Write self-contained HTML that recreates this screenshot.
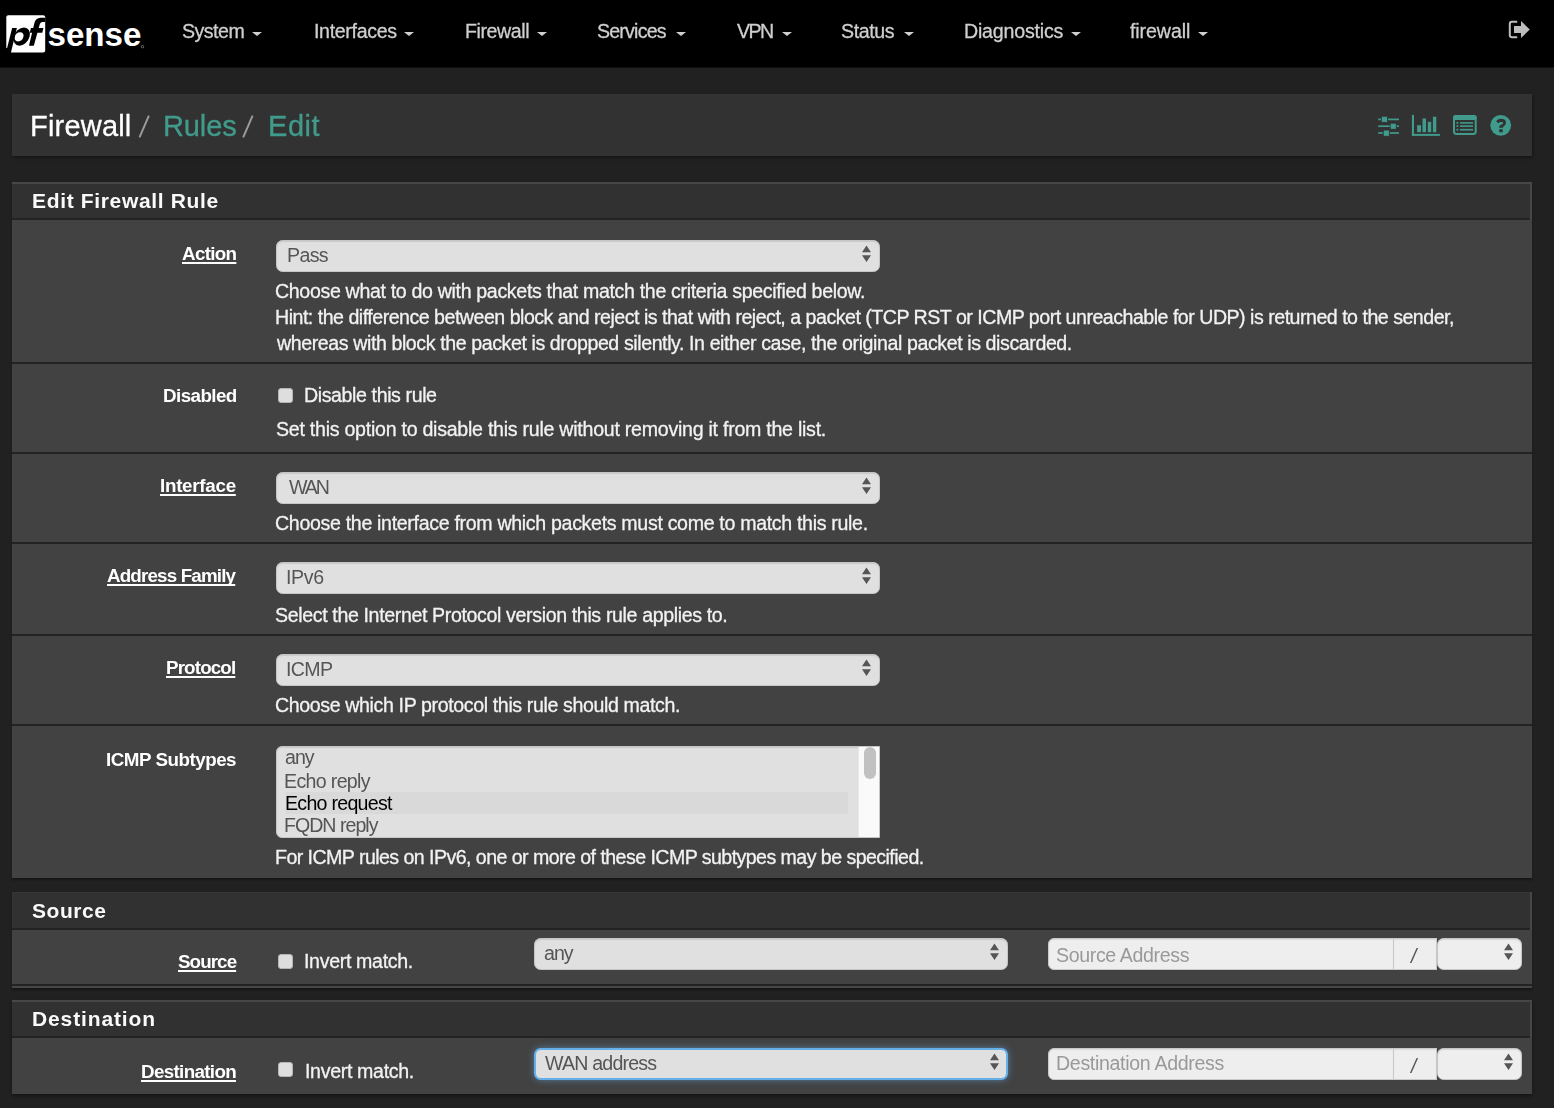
<!DOCTYPE html>
<html><head><meta charset="utf-8">
<style>
*{box-sizing:border-box;margin:0;padding:0}
html,body{width:1554px;height:1108px;overflow:hidden;background:#212121;font-family:"Liberation Sans",sans-serif;color:#f2f2f2}
.a{position:absolute}
.x{position:absolute;white-space:nowrap;line-height:20px;will-change:transform}
.car{position:absolute;width:0;height:0;border-left:5px solid transparent;border-right:5px solid transparent;border-top:4.5px solid #cfcfcf}
.sep{position:absolute;left:12px;width:1520px;height:2px;background:#232323}
.sel{position:absolute;background:#e0e0e0;border:1px solid #c6c6c6;border-radius:6.5px;box-shadow:inset 0 1px 1px rgba(0,0,0,.1)}
.cb{position:absolute;left:278px;width:15px;height:15px;background:#dedede;border:1px solid #b5b5b5;border-radius:3px}
.inp{position:absolute;background:#eeeeee;border:1px solid #c9c9c9;box-shadow:inset 0 1px 1px rgba(0,0,0,.08)}
</style></head><body>

<!-- NAVBAR -->
<div class="a" style="left:0;top:0;width:1554px;height:67px;background:#000"></div>
<div class="a" style="left:0;top:67px;width:1554px;height:1px;background:#101010"></div>
<svg class="a" style="left:5px;top:14px" width="142" height="42" viewBox="0 0 142 42">
  <path d="M1.3 3.3 Q1.3 1.3 3.3 1.3 H38.2 Q40.2 1.3 40.2 3.3 V36.5 Q40.2 38.5 38.2 38.5 H5.6 L1.3 33.6 Z" fill="#fff"/>
  <g transform="translate(16.7 22.55) skewX(-14)"><ellipse cx="0" cy="0" rx="7.9" ry="9.15" fill="#000"/></g>
  <g transform="translate(14.05 22.8) skewX(-14)"><ellipse cx="0" cy="0" rx="4.4" ry="4.6" fill="#fff"/></g>
  <path d="M7.1 13.9 L11.9 13.9 L4.6 44 L-0.4 44 Z" fill="#000"/>
  <path d="M24 31.7 L29.4 9 Q30.6 3.9 35.5 3.7 L40.3 3.7 L40.3 8.1 L37.2 8.1 Q35.3 8.3 34.7 10.5 L28.8 31.7 Z" fill="#000"/>
  <path d="M25.9 13.9 L38.4 13.9 L37.3 18.7 L24.8 18.7 Z" fill="#000"/>
  <text x="42.5" y="32.3" font-family="Liberation Sans" font-weight="bold" font-size="34" fill="#fff" textLength="94" lengthAdjust="spacingAndGlyphs">sense</text>
  <circle cx="137.5" cy="32.7" r="1.2" fill="none" stroke="#aaa" stroke-width=".6"/>
</svg>
<div class="car" style="left:252px;top:32px"></div><div class="car" style="left:404px;top:32px"></div><div class="car" style="left:537px;top:32px"></div><div class="car" style="left:676px;top:32px"></div><div class="car" style="left:782px;top:32px"></div><div class="car" style="left:904px;top:32px"></div><div class="car" style="left:1071px;top:32px"></div><div class="car" style="left:1198px;top:32px"></div>
<svg class="a" style="left:1507px;top:19px" width="25" height="21" viewBox="0 0 25 21">
  <path d="M10.2 2.8 H5 Q2.8 2.8 2.8 5 V16 Q2.8 18.2 5 18.2 H10.2" fill="none" stroke="#bdbdbd" stroke-width="2"/>
  <path d="M7 7 H14 V2 L22.8 10.5 L14 19 V14 H7 Z" fill="#bdbdbd"/>
</svg>

<!-- BREADCRUMB -->
<div class="a" style="left:12px;top:94px;width:1520px;height:62px;background:#323232;box-shadow:1px 2px 3px rgba(0,0,0,.35)"></div>
<svg class="a" style="left:1376px;top:112px" width="140" height="28" viewBox="0 0 140 28">
 <g fill="#419b8c">
  <rect x="2.2" y="6.55" width="20.8" height="1.7" />
  <rect x="2.2" y="13.35" width="20.8" height="1.7" />
  <rect x="2.2" y="20.15" width="20.8" height="1.7" />
 </g>
 <g fill="#419b8c" stroke="#323232" stroke-width="0.9">
  <rect x="5.35" y="4.25" width="6.2" height="6.2" rx=".8"/>
  <rect x="14.15" y="11.15" width="6.2" height="6.2" rx=".8"/>
  <rect x="7.25" y="18.05" width="6.2" height="6.3" rx=".8"/>
 </g>
 <g fill="#419b8c">
  <rect x="35.9" y="2.9" width="2.1" height="21"/>
  <rect x="35.9" y="21.9" width="28" height="2"/>
  <rect x="41.1" y="13.2" width="3.9" height="7"/>
  <rect x="46.5" y="6.5" width="3.5" height="13.7"/>
  <rect x="51.8" y="9.8" width="3.4" height="10.4"/>
  <rect x="56.9" y="4.7" width="3.4" height="15.5"/>
 </g>
 <rect x="78" y="3.9" width="21.7" height="18.1" rx="2.5" fill="none" stroke="#419b8c" stroke-width="2"/>
 <rect x="77" y="2.9" width="23.7" height="5" rx="2.5" fill="#419b8c"/>
 <g fill="#419b8c">
  <rect x="80.5" y="10" width="1.8" height="1.8"/><rect x="84" y="10.1" width="13" height="1.6"/>
  <rect x="80.5" y="13.2" width="1.8" height="1.8"/><rect x="84" y="13.3" width="13" height="1.6"/>
  <rect x="80.5" y="16.8" width="1.8" height="1.8"/><rect x="84" y="16.9" width="13" height="1.6"/>
 </g>
 <circle cx="124.7" cy="13.35" r="10.4" fill="#419b8c"/>
 <path d="M120.2 9.4 Q121.5 6.7 124.9 6.7 Q130 6.7 130 10.8 Q130 13 127.8 14.2 Q127 14.7 127 15.7 L123 15.7 Q123 13.9 124.5 13 Q127.3 11.8 127.3 11 Q127.3 9.9 125 9.9 Q123.4 9.9 122.6 11.2 Z M123.2 17.3 H126.7 V20.2 H123.2 Z" fill="#323232"/>
</svg>
<svg class="a" style="left:130px;top:110px" width="130" height="32" viewBox="130 110 130 32"><path d="M148.9 115.6 L139.5 137.4 M252.6 115.6 L243.2 137.4" stroke="#9a9a9a" stroke-width="2" stroke-linecap="butt"/></svg>

<!-- PANEL 1 -->
<div class="a" style="left:12px;top:182px;width:1520px;height:696px;background:#474747;box-shadow:0 2px 2px rgba(0,0,0,.35)"></div>
<div class="a" style="left:12px;top:184px;width:1518px;height:34px;background:#313131"></div>
<div class="a" style="left:12px;top:218px;width:1518px;height:2px;background:#232323"></div>
<div class="a" style="left:12px;top:220px;width:1520px;height:658px;background:#424242"></div>
<div class="sep" style="top:362px"></div>
<div class="sep" style="top:452px"></div>
<div class="sep" style="top:542px"></div>
<div class="sep" style="top:634px"></div>
<div class="sep" style="top:724px"></div>

<div class="sel" style="left:276px;top:240px;width:604px;height:32px"></div>
<div class="cb" style="top:388px"></div>
<div class="sel" style="left:276px;top:472px;width:604px;height:32px"></div>
<div class="sel" style="left:276px;top:562px;width:604px;height:32px"></div>
<div class="sel" style="left:276px;top:654px;width:604px;height:32px"></div>
<div class="a" style="left:276px;top:746px;width:604px;height:92px;background:#e0e0e0;border:1px solid #c6c6c6;border-radius:6px 0 0 6px;overflow:hidden;box-shadow:inset 0 1px 1px rgba(0,0,0,.1)">
  <div class="a" style="left:9px;top:45px;width:562px;height:22px;background:#d9d9d9"></div>
  <div class="a" style="left:581px;top:0;width:22px;height:92px;background:#fafafa;border-left:1px solid #e8e8e8"></div>
  <div class="a" style="left:587px;top:0px;width:12px;height:32px;background:#c1c1c1;border-radius:6px"></div>
</div>

<!-- SOURCE PANEL -->
<div class="a" style="left:12px;top:892px;width:1520px;height:96px;background:#424242;box-shadow:0 2px 2px rgba(0,0,0,.35)"></div>
<div class="a" style="left:1530px;top:892px;width:2px;height:38px;background:#474747"></div>
<div class="a" style="left:12px;top:892px;width:1518px;height:36px;background:#313131;border-top:1px solid #353535;border-left:1px solid #353535"></div>
<div class="a" style="left:12px;top:928px;width:1518px;height:2px;background:#232323"></div>
<div class="a" style="left:12px;top:984px;width:1520px;height:2px;background:#232323"></div>
<div class="a" style="left:12px;top:986px;width:1520px;height:2px;background:#474747"></div>
<div class="cb" style="top:954px"></div>
<div class="sel" style="left:534px;top:938px;width:474px;height:32px"></div>
<div class="inp" style="left:1048px;top:938px;width:346px;height:32px;border-radius:6px 0 0 6px"></div>
<div class="inp" style="left:1393px;top:938px;width:44px;height:32px"></div>
<div class="sel" style="left:1437px;top:938px;width:85px;height:32px;background:#eeeeee"></div>

<!-- DEST PANEL -->
<div class="a" style="left:12px;top:1000px;width:1520px;height:94px;background:#424242;box-shadow:0 2px 3px rgba(0,0,0,.4)"></div>
<div class="a" style="left:12px;top:1000px;width:1520px;height:2px;background:#474747"></div>
<div class="a" style="left:1530px;top:1000px;width:2px;height:38px;background:#474747"></div>
<div class="a" style="left:12px;top:1002px;width:1518px;height:34px;background:#313131"></div>
<div class="a" style="left:12px;top:1036px;width:1518px;height:2px;background:#232323"></div>
<div class="cb" style="top:1062px"></div>
<div class="sel" style="left:534px;top:1048px;width:474px;height:32px;border:2px solid #66afe9;box-shadow:0 0 7px rgba(102,175,233,.55)"></div>
<div class="inp" style="left:1048px;top:1048px;width:346px;height:32px;border-radius:6px 0 0 6px"></div>
<div class="inp" style="left:1393px;top:1048px;width:44px;height:32px"></div>
<div class="sel" style="left:1437px;top:1048px;width:85px;height:32px;background:#eeeeee"></div>
<svg class="a" style="left:862.0px;top:245.2px" width="9" height="18" viewBox="0 0 9 18"><path d="M4.5 0.6 L9 7.3 L0 7.3 Z M0 10.3 L9 10.3 L4.5 17 Z" fill="#555"/></svg><svg class="a" style="left:862.0px;top:477.2px" width="9" height="18" viewBox="0 0 9 18"><path d="M4.5 0.6 L9 7.3 L0 7.3 Z M0 10.3 L9 10.3 L4.5 17 Z" fill="#555"/></svg><svg class="a" style="left:862.0px;top:567.2px" width="9" height="18" viewBox="0 0 9 18"><path d="M4.5 0.6 L9 7.3 L0 7.3 Z M0 10.3 L9 10.3 L4.5 17 Z" fill="#555"/></svg><svg class="a" style="left:862.0px;top:659.2px" width="9" height="18" viewBox="0 0 9 18"><path d="M4.5 0.6 L9 7.3 L0 7.3 Z M0 10.3 L9 10.3 L4.5 17 Z" fill="#555"/></svg><svg class="a" style="left:989.9px;top:943.3px" width="9" height="18" viewBox="0 0 9 18"><path d="M4.5 0.6 L9 7.3 L0 7.3 Z M0 10.3 L9 10.3 L4.5 17 Z" fill="#555"/></svg><svg class="a" style="left:1503.9px;top:943.3px" width="9" height="18" viewBox="0 0 9 18"><path d="M4.5 0.6 L9 7.3 L0 7.3 Z M0 10.3 L9 10.3 L4.5 17 Z" fill="#555"/></svg><svg class="a" style="left:989.9px;top:1053.3px" width="9" height="18" viewBox="0 0 9 18"><path d="M4.5 0.6 L9 7.3 L0 7.3 Z M0 10.3 L9 10.3 L4.5 17 Z" fill="#555"/></svg><svg class="a" style="left:1503.9px;top:1053.3px" width="9" height="18" viewBox="0 0 9 18"><path d="M4.5 0.6 L9 7.3 L0 7.3 Z M0 10.3 L9 10.3 L4.5 17 Z" fill="#555"/></svg>

<div class="x" id="n1" style="top:21.0px;font-size:19.6px;font-weight:normal;color:#cfcfcf;letter-spacing:-0.520px;-webkit-text-stroke:0.3px #cfcfcf;left:182.36px">System</div>
<div class="x" id="n2" style="top:21.0px;font-size:19.6px;font-weight:normal;color:#cfcfcf;letter-spacing:-0.333px;-webkit-text-stroke:0.3px #cfcfcf;left:313.62px">Interfaces</div>
<div class="x" id="n3" style="top:21.0px;font-size:19.6px;font-weight:normal;color:#cfcfcf;letter-spacing:-0.429px;-webkit-text-stroke:0.3px #cfcfcf;left:465.22px">Firewall</div>
<div class="x" id="n4" style="top:21.0px;font-size:19.6px;font-weight:normal;color:#cfcfcf;letter-spacing:-0.800px;-webkit-text-stroke:0.3px #cfcfcf;left:597.38px">Services</div>
<div class="x" id="n5" style="top:21.0px;font-size:19.6px;font-weight:normal;color:#cfcfcf;letter-spacing:-1.600px;-webkit-text-stroke:0.3px #cfcfcf;left:737.00px">VPN</div>
<div class="x" id="n6" style="top:21.0px;font-size:19.6px;font-weight:normal;color:#cfcfcf;letter-spacing:-0.400px;-webkit-text-stroke:0.3px #cfcfcf;left:841.36px">Status</div>
<div class="x" id="n7" style="top:21.0px;font-size:19.6px;font-weight:normal;color:#cfcfcf;letter-spacing:-0.200px;-webkit-text-stroke:0.3px #cfcfcf;left:963.50px">Diagnostics</div>
<div class="x" id="n8" style="top:21.0px;font-size:19.6px;font-weight:normal;color:#cfcfcf;letter-spacing:-0.086px;-webkit-text-stroke:0.3px #cfcfcf;left:1130.46px">firewall</div>
<div class="x" id="b1" style="top:116.0px;font-size:29px;font-weight:normal;color:#ffffff;letter-spacing:0.200px;-webkit-text-stroke:0.3px #ffffff;left:30.36px">Firewall</div>
<div class="x" id="b3" style="top:116.0px;font-size:29px;font-weight:normal;color:#419b8c;letter-spacing:-0.100px;-webkit-text-stroke:0.3px #419b8c;left:163.00px">Rules</div>
<div class="x" id="b5" style="top:116.0px;font-size:29px;font-weight:normal;color:#419b8c;letter-spacing:0.533px;-webkit-text-stroke:0.3px #419b8c;left:267.62px">Edit</div>
<div class="x" id="h1" style="top:191.0px;font-size:21px;font-weight:bold;color:#fafafa;letter-spacing:0.659px;left:32.36px">Edit Firewall Rule</div>
<div class="x" id="h2" style="top:901.0px;font-size:21px;font-weight:bold;color:#fafafa;letter-spacing:0.560px;left:31.96px">Source</div>
<div class="x" id="h3" style="top:1009.0px;font-size:21px;font-weight:bold;color:#fafafa;letter-spacing:0.870px;left:31.96px">Destination</div>
<div class="x" id="l1" style="top:244.0px;font-size:18.8px;font-weight:bold;color:#ffffff;letter-spacing:-0.680px;text-decoration:underline;text-decoration-thickness:1.5px;text-underline-offset:2px;text-decoration-skip-ink:none;right:1318.00px">Action</div>
<div class="x" id="l2" style="top:386.0px;font-size:18.8px;font-weight:bold;color:#ffffff;letter-spacing:-0.571px;right:1317.60px">Disabled</div>
<div class="x" id="l3" style="top:476.0px;font-size:18.8px;font-weight:bold;color:#ffffff;letter-spacing:-0.275px;text-decoration:underline;text-decoration-thickness:1.5px;text-underline-offset:2px;text-decoration-skip-ink:none;right:1318.40px">Interface</div>
<div class="x" id="l4" style="top:566.0px;font-size:18.8px;font-weight:bold;color:#ffffff;letter-spacing:-0.831px;text-decoration:underline;text-decoration-thickness:1.5px;text-underline-offset:2px;text-decoration-skip-ink:none;right:1318.60px">Address Family</div>
<div class="x" id="l5" style="top:658.0px;font-size:18.8px;font-weight:bold;color:#ffffff;letter-spacing:-0.857px;text-decoration:underline;text-decoration-thickness:1.5px;text-underline-offset:2px;text-decoration-skip-ink:none;right:1319.00px">Protocol</div>
<div class="x" id="l6" style="top:750.0px;font-size:18.8px;font-weight:bold;color:#ffffff;letter-spacing:-0.483px;right:1317.60px">ICMP Subtypes</div>
<div class="x" id="l7" style="top:952.0px;font-size:18.8px;font-weight:bold;color:#ffffff;letter-spacing:-0.920px;text-decoration:underline;text-decoration-thickness:1.5px;text-underline-offset:2px;text-decoration-skip-ink:none;right:1318.20px">Source</div>
<div class="x" id="l8" style="top:1062.0px;font-size:18.8px;font-weight:bold;color:#ffffff;letter-spacing:-0.660px;text-decoration:underline;text-decoration-thickness:1.5px;text-underline-offset:2px;text-decoration-skip-ink:none;right:1318.00px">Destination</div>
<div class="x" id="t1" style="top:281.0px;font-size:19.6px;font-weight:normal;color:#f2f2f2;letter-spacing:-0.340px;-webkit-text-stroke:0.3px #f2f2f2;left:275.38px">Choose what to do with packets that match the criteria specified below.</div>
<div class="x" id="t2" style="top:307.0px;font-size:19.6px;font-weight:normal;color:#f2f2f2;letter-spacing:-0.497px;-webkit-text-stroke:0.3px #f2f2f2;left:275.38px">Hint: the difference between block and reject is that with reject, a packet (TCP RST or ICMP port unreachable for UDP) is returned to the sender,</div>
<div class="x" id="t3" style="top:333.0px;font-size:19.6px;font-weight:normal;color:#f2f2f2;letter-spacing:-0.412px;-webkit-text-stroke:0.3px #f2f2f2;left:276.50px">whereas with block the packet is dropped silently. In either case, the original packet is discarded.</div>
<div class="x" id="t4" style="top:385.0px;font-size:19.6px;font-weight:normal;color:#f2f2f2;letter-spacing:-0.400px;-webkit-text-stroke:0.3px #f2f2f2;left:303.52px">Disable this rule</div>
<div class="x" id="t5" style="top:419.0px;font-size:19.6px;font-weight:normal;color:#f2f2f2;letter-spacing:-0.260px;-webkit-text-stroke:0.3px #f2f2f2;left:276.00px">Set this option to disable this rule without removing it from the list.</div>
<div class="x" id="t6" style="top:513.0px;font-size:19.6px;font-weight:normal;color:#f2f2f2;letter-spacing:-0.326px;-webkit-text-stroke:0.3px #f2f2f2;left:275.38px">Choose the interface from which packets must come to match this rule.</div>
<div class="x" id="t7" style="top:605.0px;font-size:19.6px;font-weight:normal;color:#f2f2f2;letter-spacing:-0.368px;-webkit-text-stroke:0.3px #f2f2f2;left:275.38px">Select the Internet Protocol version this rule applies to.</div>
<div class="x" id="t8" style="top:695.0px;font-size:19.6px;font-weight:normal;color:#f2f2f2;letter-spacing:-0.379px;-webkit-text-stroke:0.3px #f2f2f2;left:275.38px">Choose which IP protocol this rule should match.</div>
<div class="x" id="t9" style="top:847.0px;font-size:19.6px;font-weight:normal;color:#f2f2f2;letter-spacing:-0.555px;-webkit-text-stroke:0.3px #f2f2f2;left:275.38px">For ICMP rules on IPv6, one or more of these ICMP subtypes may be specified.</div>
<div class="x" id="t10" style="top:951.0px;font-size:19.6px;font-weight:normal;color:#f2f2f2;letter-spacing:-0.333px;-webkit-text-stroke:0.3px #f2f2f2;left:304.00px">Invert match.</div>
<div class="x" id="t11" style="top:1061.0px;font-size:19.6px;font-weight:normal;color:#f2f2f2;letter-spacing:-0.333px;-webkit-text-stroke:0.3px #f2f2f2;left:304.50px">Invert match.</div>
<div class="x" id="v1" style="top:245.0px;font-size:19.6px;font-weight:normal;color:#555555;letter-spacing:-0.667px;left:286.74px">Pass</div>
<div class="x" id="v2" style="top:477.0px;font-size:19.6px;font-weight:normal;color:#555555;letter-spacing:-2.000px;left:288.62px">WAN</div>
<div class="x" id="v3" style="top:567.0px;font-size:19.6px;font-weight:normal;color:#555555;letter-spacing:-0.333px;left:285.94px">IPv6</div>
<div class="x" id="v4" style="top:659.0px;font-size:19.6px;font-weight:normal;color:#555555;letter-spacing:-0.667px;left:285.94px">ICMP</div>
<div class="x" id="v5" style="top:943.0px;font-size:19.6px;font-weight:normal;color:#555555;letter-spacing:-1.000px;left:544.38px">any</div>
<div class="x" id="v6" style="top:1053.0px;font-size:19.6px;font-weight:normal;color:#555555;letter-spacing:-0.800px;left:545.38px">WAN address</div>
<div class="x" id="v7" style="top:945.0px;font-size:19.6px;font-weight:normal;color:#999999;letter-spacing:-0.369px;left:1055.78px">Source Address</div>
<div class="x" id="v8" style="top:1053.0px;font-size:19.6px;font-weight:normal;color:#999999;letter-spacing:-0.333px;left:1056.38px">Destination Address</div>
<div class="x" id="v9" style="top:946.0px;font-size:19.6px;font-weight:normal;color:#555555;letter-spacing:0.000px;font-style:italic;left:1411.46px">/</div>
<div class="x" id="v10" style="top:1056.0px;font-size:19.6px;font-weight:normal;color:#555555;letter-spacing:0.000px;font-style:italic;left:1411.46px">/</div>
<div class="x" id="o1" style="top:747.0px;font-size:19.6px;font-weight:normal;color:#555555;letter-spacing:-1.000px;left:285.24px">any</div>
<div class="x" id="o2" style="top:771.0px;font-size:19.6px;font-weight:normal;color:#555555;letter-spacing:-0.667px;left:284.36px">Echo reply</div>
<div class="x" id="o3" style="top:793.0px;font-size:19.6px;font-weight:normal;color:#000000;letter-spacing:-0.727px;left:285.36px">Echo request</div>
<div class="x" id="o4" style="top:815.0px;font-size:19.6px;font-weight:normal;color:#555555;letter-spacing:-1.000px;left:284.36px">FQDN reply</div>
</body></html>
